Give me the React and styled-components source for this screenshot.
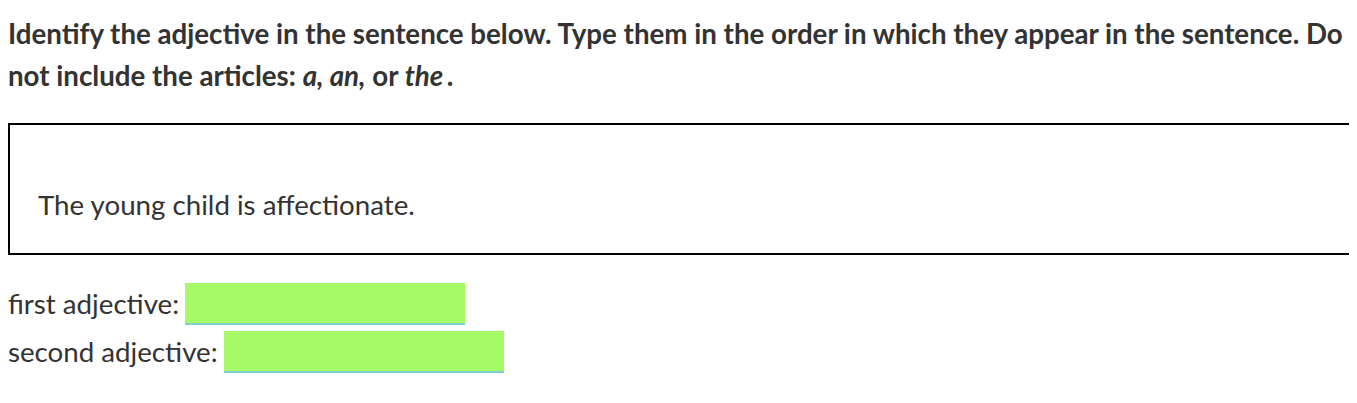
import React from "react";
import styled, { createGlobalStyle } from "styled-components";

const GlobalStyle = createGlobalStyle`
  html, body {
    overflow: hidden;
  }
  body {
    margin: 8px;
    background: #fff;
    color: #333;
    font-family: Lato, "Open Sans", sans-serif;
  }
`;

const Page = styled.div`
  display: flex;
  flex-direction: column;
`;

const Prompt = styled.p`
  margin: 5px 0 0;
  font-size: 27.7px;
  font-weight: 700;
  line-height: 42px;
  width: 1370px;
`;

const SentenceBox = styled.div`
  margin-top: 26px;
  width: 1400px;
  border: 2px solid #000;
  padding: 59px 28px 27px;
  font-size: 27.7px;
  line-height: 42px;
`;

const Answers = styled.div`
  display: flex;
  flex-direction: column;
  gap: 6px;
  margin-top: 28px;
`;

const Row = styled.label`
  display: flex;
  align-items: center;
  gap: 6px;
  font-size: 27.7px;
  line-height: 42px;
`;

const Blank = styled.input`
  width: 280px;
  height: 42px;
  box-sizing: border-box;
  border: none;
  border-bottom: 2px solid #7fd0c8;
  background: #a6fa66;
  outline: none;
  padding: 0 8px;
  font: inherit;
`;

const answers = ["first adjective:", "second adjective:"];

const App = () => (
  <>
    <GlobalStyle />
    <Page>
      <Prompt>
        Identify the adjective in the sentence below. Type them in the order in
        which they appear in the sentence. Do not include the articles:{" "}
        <em>a, an,</em> or <em>the</em>&thinsp;.
      </Prompt>
      <SentenceBox>The young child is affectionate.</SentenceBox>
      <Answers>
        {answers.map((label) => (
          <Row key={label}>
            {label}
            <Blank type="text" />
          </Row>
        ))}
      </Answers>
    </Page>
  </>
);

export default App;
